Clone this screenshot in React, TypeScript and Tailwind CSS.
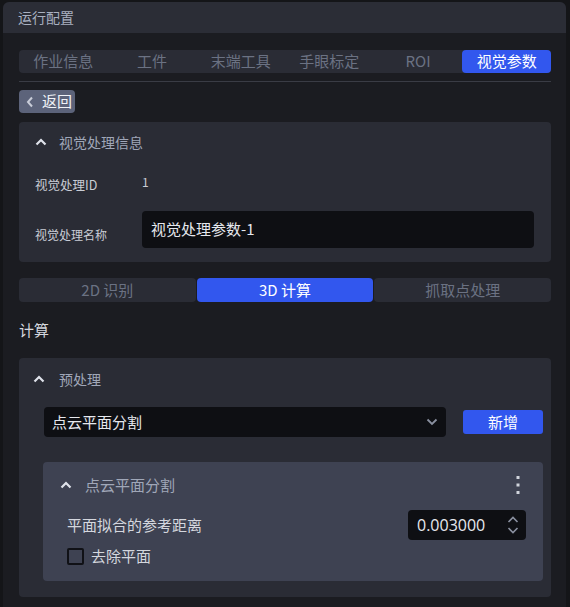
import React from "react";

const F = { fontFamily: '"Noto Sans CJK SC", "Noto Sans", sans-serif' };

function ChevUp({ className = "" }: { className?: string }) {
  return (
    <svg width="12" height="8" viewBox="0 0 12 8" className={className}>
      <path d="M1.5 6.5 L6 2 L10.5 6.5" fill="none" stroke="currentColor" strokeWidth="2.2" />
    </svg>
  );
}

export default function App() {
  const tabs = ["作业信息", "工件", "末端工具", "手眼标定", "ROI", "视觉参数"];
  return (
    <div className="w-[570px] h-[607px] bg-[#141518] pt-[2px] pl-[3px] pr-[4px] overflow-hidden" style={F}>
      <div className="h-[620px] rounded-md bg-[#1b1c21] overflow-hidden">
        <div className="h-[31px] bg-[#2b2d36] flex items-center pl-[15px] text-[14px] text-[#a9b0c0]">运行配置</div>
        <div className="pl-[16px] pr-[15px]">
          {/* top tabs */}
          <div className="mt-[17px] h-[23px] flex rounded-[4px] bg-[#2a2c35]">
            {tabs.map((t, i) => (
              <div
                key={t}
                className={
                  "flex-1 flex items-center justify-center text-[15px] rounded-[4px] " +
                  (i === 5 ? "bg-[#3257ee] text-white" : "text-[#6b7283]")
                }
              >
                {t}
              </div>
            ))}
          </div>
          <div className="mt-[8px] h-[1px] bg-[#3a3c45]" />
          <div className="mt-[8px] w-[56px] h-[23px] rounded-[4px] bg-[#5c637a] flex items-center pl-[7px] gap-[8px] text-[15px] text-[#f0f2f7]">
            <svg width="8" height="12" viewBox="0 0 8 12">
              <path d="M6 1.5 L2 6 L6 10.5" fill="none" stroke="#c8ccd8" strokeWidth="2" />
            </svg>
            <span>返回</span>
          </div>

          {/* card 1 */}
          <div className="mt-[9px] h-[140px] rounded-[4px] bg-[#2a2c35] pl-[16px] pr-[17px]">
            <div className="h-[40px] flex items-center text-[14px] text-[#a0a7b8]">
              <ChevUp className="text-[#dfe2ea]" />
              <span className="ml-[12px]">视觉处理信息</span>
            </div>
            <div className="flex h-[38px]">
              <div className="w-[107px] flex items-center text-[12.5px] text-[#c9cdd6] pt-[9px]">视觉处理ID</div>
              <div className="text-[12px] text-[#c9cdd6] pt-[11px]">1</div>
            </div>
            <div className="mt-[11px] flex">
              <div className="w-[107px] flex items-center text-[12px] text-[#c9cdd6] pt-[10px]">视觉处理名称</div>
              <div className="flex-1 h-[37px] rounded-[4px] bg-[#0e0f13] flex items-center pl-[9px] text-[15px] text-[#e6e8ee]">
                视觉处理参数-1
              </div>
            </div>
          </div>

          {/* sub tabs */}
          <div className="mt-[16px] h-[24px] flex gap-[1px]">
            <div className="flex-1 rounded-[4px] bg-[#2a2c35] flex items-center justify-center text-[15px] text-[#6b7283]">2D 识别</div>
            <div className="flex-1 rounded-[4px] bg-[#3257ee] flex items-center justify-center text-[15px] text-white">3D 计算</div>
            <div className="flex-1 rounded-[4px] bg-[#2a2c35] flex items-center justify-center text-[15px] text-[#6b7283]">抓取点处理</div>
          </div>

          <div className="mt-[16px] h-[24px] flex items-center text-[15px] text-[#d4d7de]">计算</div>

          {/* card 2 */}
          <div className="mt-[16px] h-[239px] rounded-[4px] bg-[#2a2c35] pl-[25px] pr-[8px]">
            <div className="h-[42px] flex items-center text-[14px] text-[#a0a7b8]">
              <ChevUp className="text-[#dfe2ea] -ml-[11px]" />
              <span className="ml-[14px]">预处理</span>
            </div>
            <div className="mt-[7px] flex items-center">
              <div className="w-[402px] h-[30px] rounded-[4px] bg-[#0e0f13] flex items-center justify-between pl-[8px] pr-[8px] text-[15px] text-[#e6e8ee]">
                <span>点云平面分割</span>
                <svg width="12" height="8" viewBox="0 0 12 8">
                  <path d="M1.5 1.5 L6 6 L10.5 1.5" fill="none" stroke="#8a90a0" strokeWidth="1.8" />
                </svg>
              </div>
              <div className="ml-[17px] w-[80px] h-[24px] rounded-[3px] bg-[#3257ee] flex items-center justify-center text-[15px] text-white">新增</div>
            </div>
            {/* inner card */}
            <div className="mt-[25px] h-[119px] w-[500px] -ml-[1px] rounded-[4px] bg-[#3e4252] pl-[24px] pr-[17px]">
              <div className="h-[46px] flex items-center justify-between text-[15px] text-[#a0a7b8]">
                <div className="flex items-center">
                  <ChevUp className="-ml-[7px] text-[#dfe2ea]" />
                  <span className="ml-[13px]">点云平面分割</span>
                </div>
                <svg width="4" height="18" viewBox="0 0 4 18" className="mr-[6px]">
                  <rect x="0.5" y="0" width="3" height="3" fill="#d0d4dc" />
                  <rect x="0.5" y="7.5" width="3" height="3" fill="#d0d4dc" />
                  <rect x="0.5" y="15" width="3" height="3" fill="#d0d4dc" />
                </svg>
              </div>
              <div className="flex items-center justify-between h-[31px] mt-[1px]">
                <span className="text-[15px] text-[#d4d7de] pt-[2px]">平面拟合的参考距离</span>
                <div className="w-[118px] h-[30px] rounded-[4px] bg-[#0e0f13] flex items-center justify-between pl-[9px] pr-[7px]">
                  <span className="text-[16px] text-[#e6e8ee]" style={{ fontFamily: '"Open Sans", sans-serif' }}>0.003000</span>
                  <svg width="12" height="20" viewBox="0 0 12 20">
                    <path d="M1.5 7 L6 2.5 L10.5 7" fill="none" stroke="#8a90a0" strokeWidth="1.6" />
                    <path d="M1.5 13 L6 17.5 L10.5 13" fill="none" stroke="#8a90a0" strokeWidth="1.6" />
                  </svg>
                </div>
              </div>
              <div className="mt-[5px] flex items-center">
                <div className="w-[17px] h-[17px] rounded-[2px] border-2 border-[#101116] bg-[#3e4252]" />
                <span className="ml-[7px] text-[15px] text-[#d4d7de]">去除平面</span>
              </div>
            </div>
          </div>
        </div>
      </div>
    </div>
  );
}
